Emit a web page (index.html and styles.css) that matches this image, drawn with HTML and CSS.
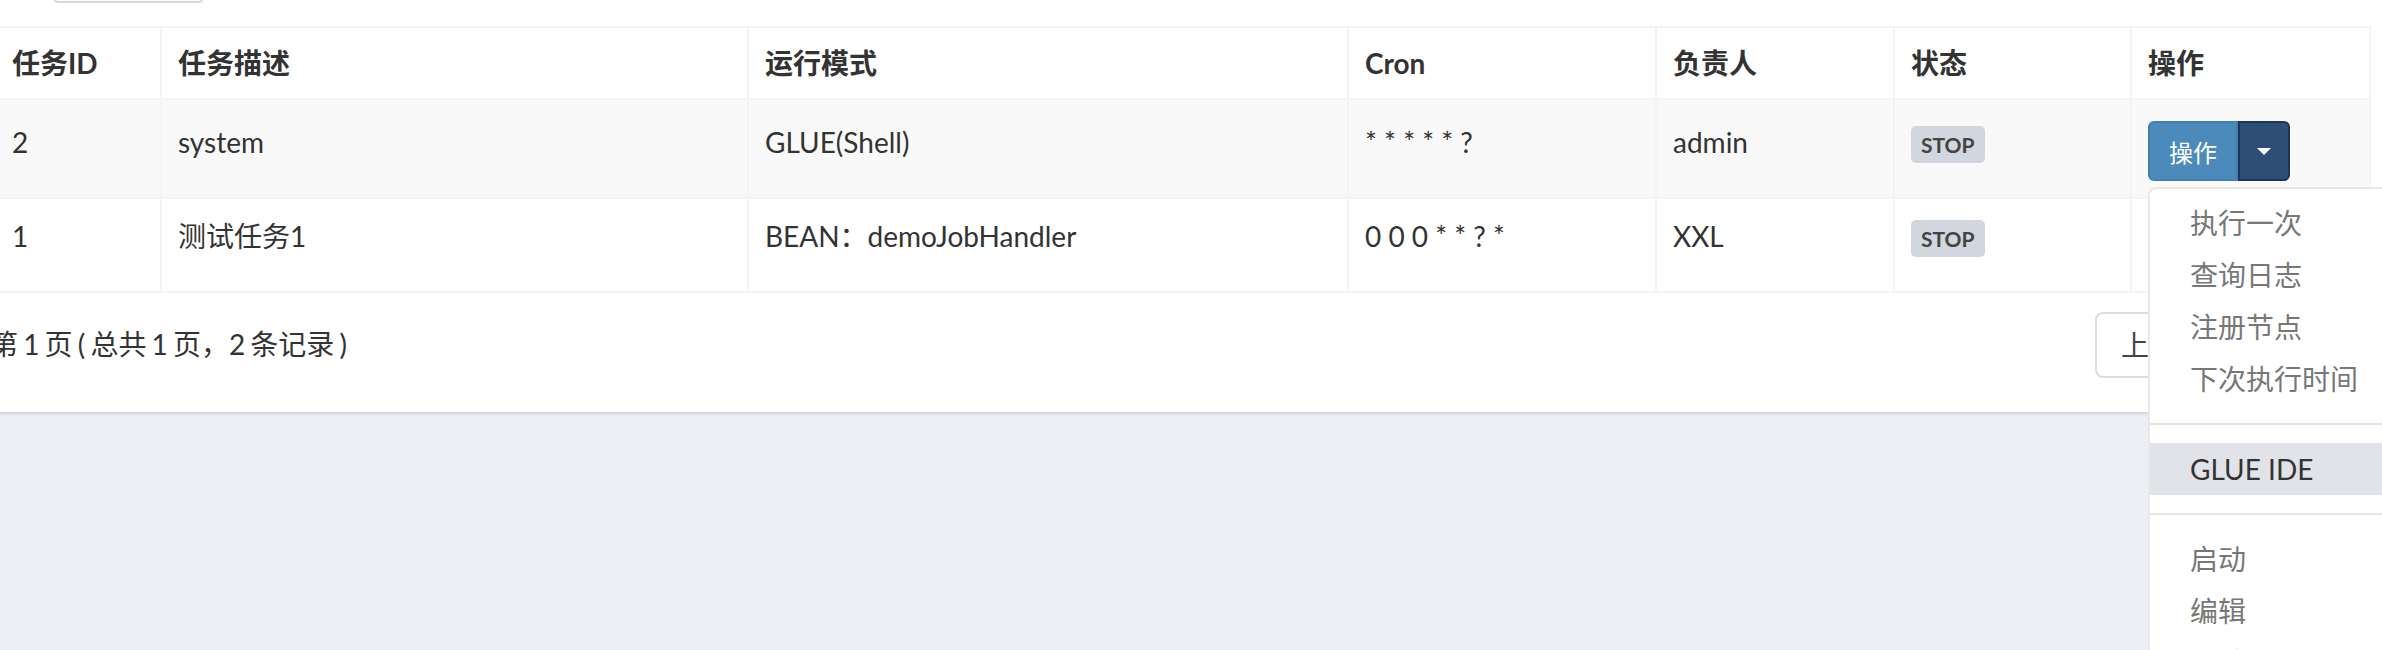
FILE: index.html
```html
<!DOCTYPE html>
<html lang="zh-CN">
<head>
<meta charset="utf-8">
<title>任务管理</title>
<link rel="stylesheet" href="styles.css">
</head>
<body>
<div class="page">
<div class="box">
  <div class="toolbar"><div class="select-stub"></div></div>
  <table class="job-table">
    <colgroup>
      <col class="c-id"><col class="c-desc"><col class="c-mode"><col class="c-cron"><col class="c-owner"><col class="c-status"><col class="c-op">
    </colgroup>
    <thead>
      <tr>
        <th>任务ID</th><th>任务描述</th><th>运行模式</th><th>Cron</th><th>负责人</th><th>状态</th><th class="last">操作</th>
      </tr>
    </thead>
    <tbody>
      <tr class="row-striped">
        <td>2</td>
        <td>system</td>
        <td>GLUE(Shell)</td>
        <td>* * * * * ?</td>
        <td>admin</td>
        <td><span class="badge">STOP</span></td>
        <td class="last">
          <div class="btn-group">
            <button class="btn-main" type="button">操作</button>
            <button class="btn-toggle" type="button"><span class="caret"></span></button>
            <ul class="menu">
              <li class="menu-item">执行一次</li>
              <li class="menu-item">查询日志</li>
              <li class="menu-item">注册节点</li>
              <li class="menu-item">下次执行时间</li>
              <li class="menu-divider"></li>
              <li class="menu-item is-hover">GLUE IDE</li>
              <li class="menu-divider"></li>
              <li class="menu-item">启动</li>
              <li class="menu-item">编辑</li>
              <li class="menu-item">删除</li>
              <li class="menu-item">复制</li>
            </ul>
          </div>
        </td>
      </tr>
      <tr class="row-plain">
        <td>1</td>
        <td>测试任务1</td>
        <td>BEAN：demoJobHandler</td>
        <td>0 0 0 * * ? *</td>
        <td>XXL</td>
        <td><span class="badge">STOP</span></td>
        <td class="last">
          <div class="btn-group">
            <button class="btn-main" type="button">操作</button>
            <button class="btn-toggle btn-toggle-idle" type="button"><span class="caret"></span></button>
          </div>
        </td>
      </tr>
    </tbody>
  </table>
  <div class="footer">
    <div class="detail">第 1 页 ( 总共 1 页，2 条记录 )</div>
    <ul class="pager">
      <li class="pager-item">上一页</li>
      <li class="pager-item pager-active">1</li>
      <li class="pager-item">下一页</li>
    </ul>
  </div>
</div>
</div>
</body>
</html>
```
FILE: styles.css
```css
body {
  margin: 0;
  padding: 0;
  background: #ecf0f5;
  font-family: Lato, "Noto Sans CJK SC", sans-serif;
  font-size: 28px;
  color: #333;
}
.page {
  height: 100vh;
  overflow: hidden;
}
.box {
  background: #fff;
  margin-left: -10px;
  width: 2480px;
  padding-bottom: 34px;
  box-shadow: 0 2px 3px rgba(0, 0, 0, 0.12);
}
.toolbar {
  display: flex;
  align-items: flex-start;
  height: 26px;
  padding-left: 64px;
}
.select-stub {
  width: 149px;
  height: 40px;
  margin-top: -37px;
  box-sizing: border-box;
  border: 2px solid #d2d6de;
  border-radius: 4px;
}
.job-table {
  margin-left: 4px;
  width: 2377px;
  table-layout: fixed;
  border-collapse: separate;
  border-spacing: 0;
}
.c-id { width: 166px; }
.c-desc { width: 587px; }
.c-mode { width: 600px; }
.c-cron { width: 308px; }
.c-owner { width: 238px; }
.c-status { width: 237px; }
.c-op { width: 241px; }
.job-table th,
.job-table td {
  border-top: 2px solid #f4f4f4;
  border-left: 2px solid #f4f4f4;
  padding: 16px;
  line-height: 42px;
  text-align: left;
  vertical-align: top;
  white-space: nowrap;
}
.job-table th {
  padding: 14px 16px;
  font-weight: 700;
}
.job-table .last {
  border-right: 2px solid #f4f4f4;
}
.row-striped td {
  background: #f9f9f9;
  padding-top: 21px;
}
.row-plain td {
  border-bottom: 2px solid #f4f4f4;
}
.badge {
  display: inline-block;
  vertical-align: top;
  margin-top: 5px;
  height: 37px;
  line-height: 37px;
  padding: 0 10px;
  font-size: 21px;
  font-weight: 700;
  background: #d2d6de;
  color: #444;
  border-radius: 5px;
}
.btn-group {
  display: inline-flex;
  vertical-align: top;
  position: relative;
  height: 60px;
}
.btn-main,
.btn-toggle {
  box-sizing: border-box;
  height: 60px;
  margin: 0;
  padding: 0;
  font-family: inherit;
  display: flex;
  align-items: center;
  justify-content: center;
}
.btn-main {
  width: 90px;
  background: #4c8abb;
  border: 2px solid #4280b1;
  border-radius: 6px 0 0 6px;
  color: #fff;
  font-size: 24px;
}
.btn-toggle {
  width: 52px;
  background: #2d4f75;
  border: 2px solid #1c3756;
  border-radius: 0 6px 6px 0;
}
.btn-toggle-idle {
  background: #3c7fb0;
  border-color: #3677a8;
}
.caret {
  width: 0;
  height: 0;
  border-left: 7px solid transparent;
  border-right: 7px solid transparent;
  border-top: 7px solid #fff;
}
.menu {
  position: absolute;
  top: calc(100% + 6px);
  left: 0;
  z-index: 10;
  width: 340px;
  margin: 0;
  padding: 8px 0;
  list-style: none;
  background: #fff;
  border: 2px solid #e8e8e8;
  border-radius: 8px;
}
.menu-item {
  padding: 5px 40px;
  line-height: 42px;
  font-size: 28px;
  color: #777;
  white-space: nowrap;
}
.menu-item.is-hover {
  background: #e1e3e9;
  color: #333;
}
.menu-divider {
  height: 2px;
  margin: 18px 0;
  background: #e5e5e5;
}
.footer {
  display: grid;
  grid-template-columns: 2105px 334px;
  align-items: start;
  padding-top: 19px;
}
.detail {
  margin-top: 11px;
  line-height: 42px;
  white-space: nowrap;
  word-spacing: -2px;
}
.pager {
  display: flex;
  margin: 0;
  padding: 0;
  list-style: none;
}
.pager-item {
  padding: 10px 24px;
  line-height: 42px;
  border: 2px solid #ddd;
  margin-left: -2px;
  color: #444;
  white-space: nowrap;
}
.pager-item:first-child {
  margin-left: 0;
  border-radius: 8px 0 0 8px;
}
.pager-active {
  background: #3c8dbc;
  border-color: #367fa9;
  color: #fff;
}
```
